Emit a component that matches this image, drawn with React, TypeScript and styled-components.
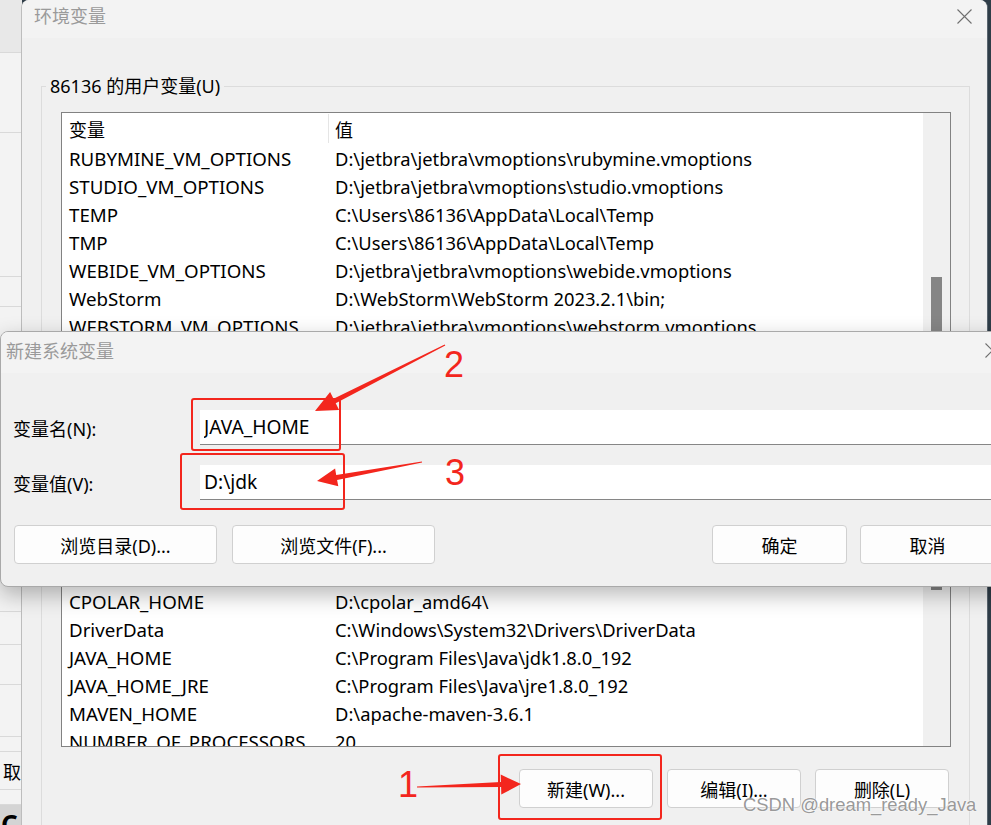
import React from "react";
import styled, { createGlobalStyle } from "styled-components";

const UI_FONT = `"Noto Sans", "Noto Sans CJK SC", sans-serif`;
const RED = "#f3261d";

const GlobalStyle = createGlobalStyle`
  html, body {
    margin: 0;
    padding: 0;
  }
  body {
    width: 991px;
    height: 825px;
    overflow: hidden;
    background: #2f3d48;
    font-family: ${UI_FONT};
  }
`;

const Desktop = styled.div`
  position: relative;
  width: 991px;
  height: 825px;
  overflow: hidden;
  background: #2f3d48;
  font-family: ${UI_FONT};
  font-size: 18px;
  color: #000;
`;

/* window peeking out on the far left */
const BackWindow = styled.div`
  position: absolute;
  left: 0;
  top: 0;
  width: 22px;
  height: 825px;
  background: #f0f0f0;
  display: flex;
  flex-direction: column;
  overflow: hidden;
`;

const BackRow = styled.div<{ $h: number; $bg?: string }>`
  height: ${(p) => p.$h}px;
  flex-shrink: 0;
  box-sizing: border-box;
  background: ${(p) => p.$bg || "#f3f3f3"};
  border-bottom: 1px solid #d9d9d9;
  padding-left: 3px;
  display: flex;
  align-items: center;
  font-size: 18px;
  white-space: nowrap;
`;

const BackFooter = styled.div`
  flex: 1;
  background: #d4d4d4;
  padding: 6px 0 0 1px;
  font-size: 26px;
  font-weight: 700;
  line-height: 1;
  overflow: hidden;
`;

const MainWindow = styled.div`
  position: absolute;
  left: 21px;
  top: 0;
  width: 967px;
  height: 880px;
  box-sizing: border-box;
  background: #f0f0f0;
  border-left: 1px solid #bdbdbd;
  border-right: 1px solid #5a6670;
  border-top-left-radius: 8px;
  border-top-right-radius: 8px;
  display: flex;
  flex-direction: column;
  overflow: hidden;
`;

const TitleBar = styled.div<{ $h: number; $pl: number; $pr: number; $lift: number }>`
  height: ${(p) => p.$h}px;
  flex-shrink: 0;
  box-sizing: border-box;
  padding: 0 ${(p) => p.$pr}px ${(p) => p.$lift}px ${(p) => p.$pl}px;
  background: #f3f3f3;
  display: flex;
  align-items: center;
  justify-content: space-between;
`;

const Title = styled.span`
  color: #9a9a9a;
  font-size: 18px;
  line-height: 1;
  white-space: nowrap;
`;

const WindowBody = styled.div`
  flex: 1;
  display: flex;
  flex-direction: column;
  padding: 0 17px 0 19px;
`;

const GroupBox = styled.fieldset`
  margin: 37px 0 0;
  padding: 0;
  min-width: 0;
  flex: 1;
  border: 1px solid #dcdcdc;
`;

const GroupLegend = styled.legend`
  margin-left: 4px;
  padding: 0 4px;
  font-size: 18px;
  line-height: 22px;
  color: #000;
`;

const GroupContent = styled.div`
  padding: 15px 18px 0 19px;
`;

const ListBox = styled.div`
  height: 635px;
  box-sizing: border-box;
  border: 1px solid #828282;
  background: #fff;
  display: flex;
  overflow: hidden;
`;

const ListBody = styled.div`
  flex: 1;
  min-width: 0;
  overflow: hidden;
`;

const Scrollbar = styled.div`
  width: 27px;
  flex-shrink: 0;
  background: #f0f0f0;
  display: flex;
  justify-content: center;
`;

const Thumb = styled.div<{ $top: number; $h: number }>`
  margin-top: ${(p) => p.$top}px;
  width: 11px;
  height: ${(p) => p.$h}px;
  background: #858585;
`;

const HeaderRow = styled.div`
  height: 31px;
  display: flex;
`;

const HeadCell = styled.div<{ $w?: number; $divider?: boolean }>`
  ${(p) => (p.$w ? `width: ${p.$w}px;` : "flex: 1;")}
  box-sizing: border-box;
  padding-left: ${(p) => (p.$divider ? 7 : 6)}px;
  display: flex;
  align-items: center;
  border-right: ${(p) => (p.$divider ? "1px solid #e5e5e5" : "none")};
  margin: 1px 0 1px;
`;

const Row = styled.div`
  height: 28px;
  display: flex;
  align-items: center;
  white-space: nowrap;
`;

const NameCell = styled.div`
  width: 267px;
  flex-shrink: 0;
  box-sizing: border-box;
  padding-left: 7px;
  overflow: hidden;
  font-size: 18.7px;
`;

const ValueCell = styled.div`
  padding-left: 6px;
  font-size: 18.35px;
`;

const HiddenGap = styled.div<{ $h: number }>`
  height: ${(p) => p.$h}px;
`;

const ButtonRow = styled.div`
  display: flex;
  justify-content: flex-end;
  gap: 14px;
  margin-top: 22px;
  padding-right: 2px;
`;

const WinButton = styled.button<{ $w: number }>`
  width: ${(p) => p.$w}px;
  height: 39px;
  padding: 0;
  box-sizing: border-box;
  background: #fdfdfd;
  border: 1px solid #d0d0d0;
  border-radius: 4px;
  font-family: ${UI_FONT};
  font-size: 18px;
  color: #000;
  display: flex;
  align-items: center;
  justify-content: center;
  white-space: nowrap;
`;

const Dialog = styled.div`
  position: absolute;
  left: 0;
  top: 331px;
  width: 1015px;
  height: 256px;
  box-sizing: border-box;
  background: #f0f0f0;
  border: 1px solid #a9a9a9;
  border-radius: 8px;
  box-shadow: 0 8px 22px rgba(0, 0, 0, 0.28);
  display: flex;
  flex-direction: column;
  overflow: hidden;
  z-index: 2;
`;

const DialogBody = styled.div`
  padding: 37px 19px 0 0;
  display: flex;
  flex-direction: column;
`;

const FieldRow = styled.div<{ $mt: number }>`
  margin-top: ${(p) => p.$mt}px;
  height: 35px;
  display: flex;
  align-items: center;
`;

const FieldLabel = styled.label`
  width: 199px;
  flex-shrink: 0;
  box-sizing: border-box;
  padding-left: 12px;
  white-space: nowrap;
`;

const FieldInput = styled.input`
  flex: 1;
  height: 35px;
  box-sizing: border-box;
  background: #fff;
  border: 0;
  border-bottom: 1px solid #868686;
  padding: 0 0 2px 4px;
  margin: 0;
  outline: none;
  font-family: ${UI_FONT};
  font-size: 19.2px;
  color: #000;
`;

const DialogButtons = styled.div`
  margin-top: 25px;
  padding: 0 19px 0 13px;
  display: flex;
`;

const ButtonGroup = styled.div<{ $gap: number; $push?: boolean }>`
  display: flex;
  gap: ${(p) => p.$gap}px;
  margin-left: ${(p) => (p.$push ? "auto" : "0")};
`;

/* annotations drawn over the screenshot */
const Overlay = styled.div`
  position: absolute;
  inset: 0;
  pointer-events: none;
  z-index: 5;
`;

const ArrowLayer = styled.svg`
  position: absolute;
  left: 0;
  top: 0;
`;

const RedBox = styled.div<{ $x: number; $y: number; $w: number; $h: number }>`
  position: absolute;
  left: ${(p) => p.$x}px;
  top: ${(p) => p.$y}px;
  width: ${(p) => p.$w}px;
  height: ${(p) => p.$h}px;
  box-sizing: border-box;
  border: 2px solid ${RED};
  border-radius: 3px;
`;

const StepNumber = styled.span<{ $x: number; $y: number }>`
  position: absolute;
  left: ${(p) => p.$x}px;
  top: ${(p) => p.$y}px;
  font-family: "Liberation Sans", Arial, sans-serif;
  font-size: 36px;
  line-height: 36px;
  color: ${RED};
`;

const Watermark = styled.span`
  position: absolute;
  left: 743px;
  top: 796px;
  font-family: "Liberation Sans", Arial, sans-serif;
  font-size: 18.4px;
  line-height: 1;
  color: rgba(140, 140, 140, 0.9);
  text-shadow: 0 0 2px #fff, 0 0 1px #fff;
  white-space: nowrap;
`;

const CloseIcon = () => (
  <svg width="15" height="15" viewBox="0 0 15 15">
    <path d="M0.5 0.5L14.5 14.5M14.5 0.5L0.5 14.5" stroke="#707070" strokeWidth="1.1" fill="none" />
  </svg>
);

type Pt = [number, number];

function arrowPoints(tail: Pt, tip: Pt, headLen: number, headHalf: number, shaftHalf: number) {
  const dx = tip[0] - tail[0];
  const dy = tip[1] - tail[1];
  const len = Math.hypot(dx, dy);
  const ux = dx / len;
  const uy = dy / len;
  const nx = -uy;
  const ny = ux;
  const bx = tip[0] - ux * headLen;
  const by = tip[1] - uy * headLen;
  const pts: Pt[] = [
    [tail[0] + nx * 0.6, tail[1] + ny * 0.6],
    [bx + nx * shaftHalf, by + ny * shaftHalf],
    [bx + nx * headHalf, by + ny * headHalf],
    tip,
    [bx - nx * headHalf, by - ny * headHalf],
    [bx - nx * shaftHalf, by - ny * shaftHalf],
    [tail[0] - nx * 0.6, tail[1] - ny * 0.6],
  ];
  return pts.map((p) => `${p[0].toFixed(1)},${p[1].toFixed(1)}`).join(" ");
}

const topRows = [
  ["RUBYMINE_VM_OPTIONS", "D:\\jetbra\\jetbra\\vmoptions\\rubymine.vmoptions"],
  ["STUDIO_VM_OPTIONS", "D:\\jetbra\\jetbra\\vmoptions\\studio.vmoptions"],
  ["TEMP", "C:\\Users\\86136\\AppData\\Local\\Temp"],
  ["TMP", "C:\\Users\\86136\\AppData\\Local\\Temp"],
  ["WEBIDE_VM_OPTIONS", "D:\\jetbra\\jetbra\\vmoptions\\webide.vmoptions"],
  ["WebStorm", "D:\\WebStorm\\WebStorm 2023.2.1\\bin;"],
  ["WEBSTORM_VM_OPTIONS", "D:\\jetbra\\jetbra\\vmoptions\\webstorm.vmoptions"],
];

const bottomRows = [
  ["CPOLAR_HOME", "D:\\cpolar_amd64\\"],
  ["DriverData", "C:\\Windows\\System32\\Drivers\\DriverData"],
  ["JAVA_HOME", "C:\\Program Files\\Java\\jdk1.8.0_192"],
  ["JAVA_HOME_JRE", "C:\\Program Files\\Java\\jre1.8.0_192"],
  ["MAVEN_HOME", "D:\\apache-maven-3.6.1"],
  ["NUMBER_OF_PROCESSORS", "20"],
];

const backRows: { h: number; bg?: string; text?: string }[] = [
  { h: 53, bg: "#e8e8e8" },
  { h: 80 },
  { h: 144 },
  { h: 30 },
  { h: 305 },
  { h: 33 },
  { h: 40 },
  { h: 52 },
  { h: 15 },
  { h: 38, text: "取" },
  { h: 15 },
];

const VarRow = ({ name, value }: { name: string; value: string }) => (
  <Row>
    <NameCell>{name}</NameCell>
    <ValueCell>{value}</ValueCell>
  </Row>
);

export default function App() {
  return (
    <>
      <GlobalStyle />
      <Desktop>
        <BackWindow>
          {backRows.map((r, i) => (
            <BackRow key={i} $h={r.h} $bg={r.bg}>
              {r.text}
            </BackRow>
          ))}
          <BackFooter>C</BackFooter>
        </BackWindow>

        <MainWindow>
          <TitleBar $h={38} $pl={12} $pr={15} $lift={6}>
            <Title>环境变量</Title>
            <CloseIcon />
          </TitleBar>
          <WindowBody>
            <GroupBox>
              <GroupLegend>86136 的用户变量(U)</GroupLegend>
              <GroupContent>
                <ListBox>
                  <ListBody>
                    <HeaderRow>
                      <HeadCell $w={267} $divider>
                        变量
                      </HeadCell>
                      <HeadCell>值</HeadCell>
                    </HeaderRow>
                    {topRows.map(([n, v]) => (
                      <VarRow key={n} name={n} value={v} />
                    ))}
                    <HiddenGap $h={247} />
                    {bottomRows.map(([n, v]) => (
                      <VarRow key={n} name={n} value={v} />
                    ))}
                  </ListBody>
                  <Scrollbar>
                    <Thumb $top={164} $h={313} />
                  </Scrollbar>
                </ListBox>
                <ButtonRow>
                  <WinButton $w={134}>新建(W)...</WinButton>
                  <WinButton $w={134}>编辑(I)...</WinButton>
                  <WinButton $w={134}>删除(L)</WinButton>
                </ButtonRow>
              </GroupContent>
            </GroupBox>
          </WindowBody>
        </MainWindow>

        <Dialog>
          <TitleBar $h={41} $pl={5} $pr={14} $lift={4}>
            <Title>新建系统变量</Title>
            <CloseIcon />
          </TitleBar>
          <DialogBody>
            <FieldRow $mt={0}>
              <FieldLabel>变量名(N):</FieldLabel>
              <FieldInput readOnly value="JAVA_HOME" />
            </FieldRow>
            <FieldRow $mt={20}>
              <FieldLabel>变量值(V):</FieldLabel>
              <FieldInput readOnly value="D:\jdk" />
            </FieldRow>
          </DialogBody>
          <DialogButtons>
            <ButtonGroup $gap={15}>
              <WinButton $w={203}>浏览目录(D)...</WinButton>
              <WinButton $w={203}>浏览文件(F)...</WinButton>
            </ButtonGroup>
            <ButtonGroup $gap={13} $push>
              <WinButton $w={135}>确定</WinButton>
              <WinButton $w={135}>取消</WinButton>
            </ButtonGroup>
          </DialogButtons>
        </Dialog>

        <Overlay>
          <ArrowLayer width="991" height="825" viewBox="0 0 991 825">
            <polygon points={arrowPoints([445, 345], [315, 411], 22, 10, 2.5)} fill={RED} />
            <polygon points={arrowPoints([422, 462], [317, 481], 20, 9, 2.5)} fill={RED} />
            <polygon points={arrowPoints([417, 787], [521, 784], 20, 10, 2.5)} fill={RED} />
          </ArrowLayer>
          <RedBox $x={191} $y={398} $w={150} $h={53} />
          <RedBox $x={180} $y={453} $w={165} $h={57} />
          <RedBox $x={498} $y={754} $w={164} $h={66} />
          <StepNumber $x={444} $y={347}>2</StepNumber>
          <StepNumber $x={445} $y={455}>3</StepNumber>
          <StepNumber $x={398} $y={767}>1</StepNumber>
        </Overlay>

        <Watermark>CSDN @dream_ready_Java</Watermark>
      </Desktop>
    </>
  );
}
